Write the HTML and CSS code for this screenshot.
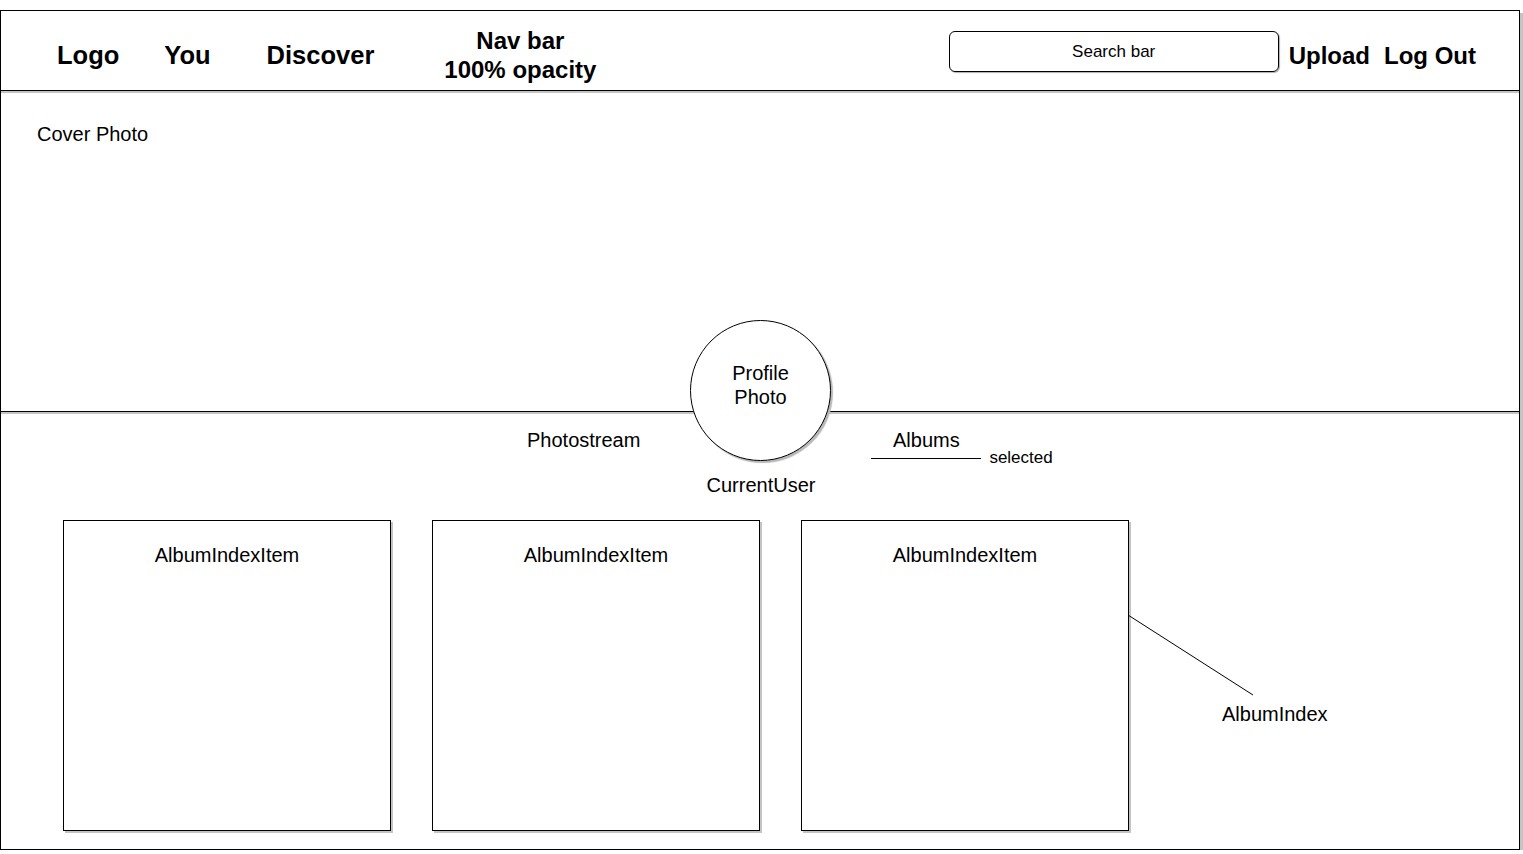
FILE: index.html
```html
<!DOCTYPE html>
<html lang="en">
<head>
    <meta charset="UTF-8">
    <title>Profile - Albums wireframe</title>
    <link rel="stylesheet" href="styles.css">
</head>
<body>
    <div class="frame">
        <header class="nav">
            <a href="#" class="nav-item nav-main logo">Logo</a>
            <a href="#" class="nav-item nav-main you">You</a>
            <a href="#" class="nav-item nav-main discover">Discover</a>
            <div class="nav-item nav-note">Nav bar<br>100% opacity</div>
            <div class="nav-right">
                <div class="search-bar">Search bar</div>
                <a href="#" class="nav-item upload">Upload</a>
                <a href="#" class="nav-item logout">Log Out</a>
            </div>
        </header>

        <section class="cover">
            <span class="cover-label">Cover Photo</span>
        </section>

        <div class="profile-photo">Profile<br>Photo</div>

        <main class="content">
            <div class="tabs">
                <span class="tab">Photostream</span>
                <span class="tab tab-selected">Albums</span>
                <span class="tab-note">selected</span>
            </div>
            <div class="current-user">CurrentUser</div>

            <div class="album-index">
                <div class="album-item">AlbumIndexItem</div>
                <div class="album-item">AlbumIndexItem</div>
                <div class="album-item">AlbumIndexItem</div>
            </div>

            <!-- annotation pointing at the album index -->
            <svg class="note-line" width="140" height="90" viewBox="0 0 140 90">
                <line x1="0" y1="0" x2="125" y2="80" stroke="#000" stroke-width="1"/>
            </svg>
            <span class="note-label">AlbumIndex</span>
        </main>
    </div>
</body>
</html>
```

FILE: styles.css
```css
* {
    margin: 0;
    padding: 0;
    box-sizing: border-box;
}

body {
    background: #ffffff;
    color: #000000;
    font-family: "Liberation Sans", Arial, sans-serif;
}

a {
    color: inherit;
    text-decoration: none;
}

.frame {
    position: relative;
    margin-top: 10px;
    width: 1520px;
    height: 840px;
    border: 1px solid #000;
    box-shadow: 3px 3px 0 #c4c4c4;
}

/* Nav bar */
.nav {
    display: flex;
    align-items: center;
    height: 80px;
    padding: 10px 43px 0 56px;
    border-bottom: 1px solid #000;
    box-shadow: 0 2px 0 #c4c4c4;
}

.nav-item {
    font-size: 24px;
    font-weight: 700;
    line-height: 29px;
}

.nav-main {
    font-size: 25.5px;
}

.you {
    margin-left: 45px;
}

.discover {
    margin-left: 56px;
}

.nav-note {
    margin-left: 70px;
    text-align: center;
    margin-top: -2px;
}

.nav-right {
    display: flex;
    align-items: center;
    margin-left: auto;
}

.search-bar {
    margin-bottom: 9px;
    width: 330px;
    height: 41px;
    border: 1px solid #000;
    border-radius: 6px;
    box-shadow: 1px 1px 1px #b0b0b0;
    font-size: 17px;
    line-height: 39px;
    text-align: center;
}

.upload {
    margin-left: 10px;
}

.logout {
    margin-left: 14px;
}

/* Cover photo */
.cover {
    height: 320px;
    margin-top: 1px;
    padding: 31px 36px;
    border-bottom: 1px solid #000;
    box-shadow: 0 2px 0 #c4c4c4;
}

.cover-label {
    font-size: 20px;
    line-height: 23px;
}

.profile-photo {
    position: absolute;
    left: 689px;
    top: 309px;
    width: 141px;
    height: 141px;
    border: 1px solid #000;
    border-radius: 50%;
    background: #fff;
    box-shadow: 2px 2px 1px #b8b8b8;
    display: flex;
    align-items: center;
    justify-content: center;
    text-align: center;
    font-size: 20px;
    line-height: 24px;
    padding-bottom: 11px;
    z-index: 2;
}

/* Tabs + album index */
.content {
    position: relative;
    height: 437px;
    padding-top: 17px;
}

.tabs {
    display: flex;
    align-items: flex-start;
    padding-left: 526px;
    font-size: 20px;
    line-height: 23px;
}

.tab-selected {
    margin-left: 231px;
    width: 110px;
    text-align: center;
    padding-bottom: 6px;
    border-bottom: 1px solid #000;
}

.tab-note {
    margin-left: 8px;
    margin-top: 19px;
    font-size: 17px;
    line-height: 20px;
}

.current-user {
    margin-top: 6px;
    text-align: center;
    padding-left: 2px;
    font-size: 20px;
    line-height: 23px;
}

.album-index {
    display: flex;
    gap: 41px;
    margin-top: 23px;
    padding-left: 62px;
}

.album-item {
    width: 328px;
    height: 311px;
    border: 1px solid #000;
    box-shadow: 2px 2px 0 #c4c4c4;
    padding-top: 23px;
    text-align: center;
    font-size: 20px;
    line-height: 23px;
}

.note-line {
    position: absolute;
    left: 1127px;
    top: 203px;
}

.note-label {
    position: absolute;
    left: 1221px;
    top: 291px;
    font-size: 20px;
    line-height: 23px;
}
```
